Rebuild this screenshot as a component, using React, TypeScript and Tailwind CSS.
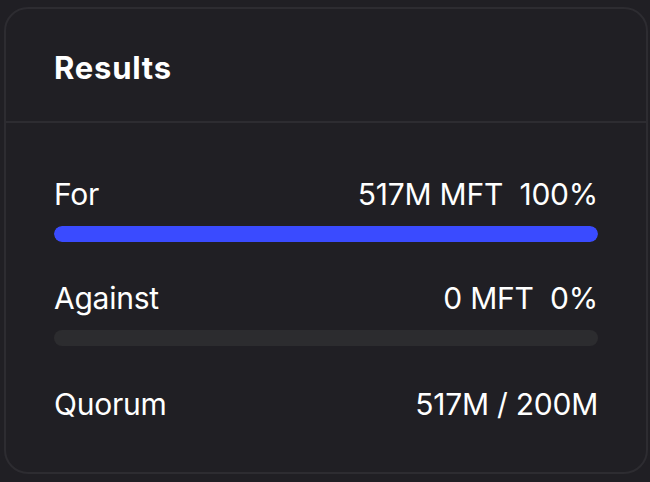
import React from 'react';

const rows = [
  { label: 'For', amount: '517M MFT', pct: 100 },
  { label: 'Against', amount: '0 MFT', pct: 0 },
];

export default function App() {
  return (
    <div className="w-[650px] h-[482px] bg-[#201f24] pt-[7px] pl-[4px] font-['Inter',sans-serif] text-white">
      <div className="w-[644px] h-[467px] rounded-[24px] border-2 border-[#2d2c31] bg-[#201f24] flex flex-col">
        {/* Header */}
        <div className="h-[114px] flex items-center pt-[5px] px-[48px] border-b-2 border-[#2d2c31]">
          <h2 className="text-[31px] font-bold leading-9 tracking-[0.025em]">Results</h2>
        </div>

        {/* Votes */}
        <div className="flex flex-col px-[48px] pt-[53px] tracking-[-0.015em]">
          {rows.map((r) => (
            <div key={r.label} className="flex flex-col gap-[14px] mb-[38px]">
              <div className="flex justify-between text-[30px] leading-9">
                <span>{r.label}</span>
                <span className="whitespace-pre">{`${r.amount}  ${r.pct}%`}</span>
              </div>
              <div className="h-4 rounded-full bg-[#2c2c2f] overflow-hidden">
                <div className="h-full rounded-full bg-[#3a4bff]" style={{ width: `${r.pct}%` }} />
              </div>
            </div>
          ))}
          <div className="flex justify-between text-[30px] leading-9 mt-[2px]">
            <span>Quorum</span>
            <span>517M / 200M</span>
          </div>
        </div>
      </div>
    </div>
  );
}
